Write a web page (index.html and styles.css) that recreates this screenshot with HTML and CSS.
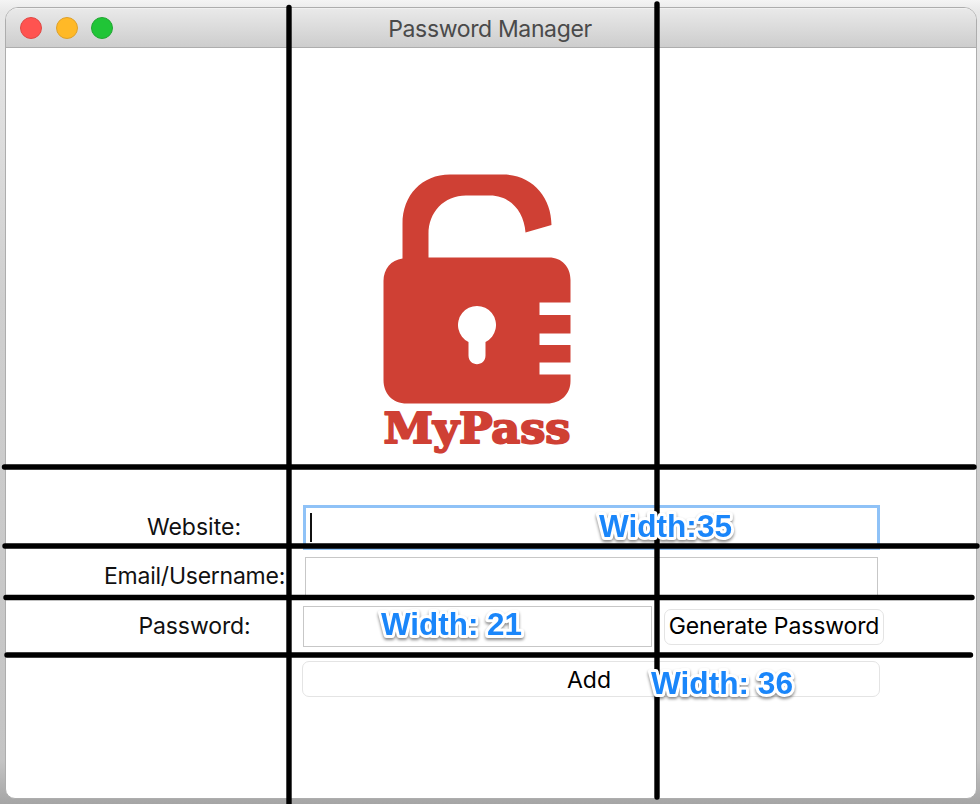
FILE: index.html
```html
<!DOCTYPE html>
<html lang="en">
<head>
<meta charset="utf-8">
<title>Password Manager</title>
<link rel="stylesheet" href="styles.css">
</head>
<body>
<main class="window">
  <header class="titlebar">
    <div class="lights"><span class="light close"></span><span class="light minimize"></span><span class="light expand"></span></div>
    <h1 class="title">Password Manager</h1>
  </header>
  <section class="hero">
    <svg class="logo" width="200" height="290" viewBox="377 170 200 290" role="img" aria-label="MyPass">
      <path fill="#cf4034" fill-rule="evenodd" d="M402.500 258.500V224C402.500 195 422 174.500 450 174.500H503C532 174.500 551.500 197 551.500 225L525.500 232.500C524 211 510 195.500 490 195.500H466C444 195.500 428.500 212 428.500 234V257.500H549C562 257.500 570.500 267 570.500 280V302.500H539.500V315H570.500V333.500H539.500V345H570.500V362.500H539.500V374.500H570.500V381C570.500 394 561 403.500 547 403.500H407C392 403.500 383.500 393 383.500 380V281C383.500 269 391 260 402.500 258.500ZM468.500 342V355.500C468.500 367 485.500 367 485.500 355.500V342A19 19 0 1 0 468.500 342Z"/>
      <text class="brand" x="383.500" y="443" textLength="187" lengthAdjust="spacingAndGlyphs">MyPass</text>
    </svg>
  </section>
  <form class="form">
    <div class="row website"><label for="site">Website:</label><input id="site" class="field focused"><i class="caret"></i></div>
    <div class="row email"><label for="mail">Email/Username:</label><input id="mail" class="field"></div>
    <div class="row password"><label for="pass">Password:</label><input id="pass" class="field"><button type="button" class="button generate">Generate Password</button></div>
    <div class="row actions"><button type="button" class="button add">Add</button></div>
  </form>
</main>
<svg class="guides" width="980" height="804" viewBox="0 0 980 804">
  <g class="lines">
    <path d="M289 7.500V806M657 4V797M4.500 467H974M5 546H977M6 597.500H972M7 655H970.500"/>
  </g>
  <g class="notes">
    <text x="599" y="537" textLength="133" lengthAdjust="spacingAndGlyphs">Width:35</text>
    <text x="381" y="635" textLength="141" lengthAdjust="spacingAndGlyphs">Width: 21</text>
    <text x="651" y="693.500" textLength="142" lengthAdjust="spacingAndGlyphs">Width: 36</text>
  </g>
</svg>
</body>
</html>
```
FILE: styles.css
```css
* { box-sizing: border-box; }
html { height: 100%; }
body {
  margin: 0;
  height: 804px;
  padding: 7px 3px 5px 5px;
  overflow: hidden;
  position: relative;
  background: linear-gradient(#f4f4f4 0, #e8e8e8 12px, #cfcfcf 300px, #c4c4c4 760px, #a5a5a5 804px);
  font-family: Inter, "Liberation Sans", sans-serif;
  font-size: 23px;
  color: #111;
}
.window {
  height: 792px;
  border: 1px solid #adadad;
  border-radius: 13px 13px 10px 10px;
  background: #fff;
  overflow: hidden;
}
.titlebar {
  height: 40px;
  display: grid;
  grid-template-columns: 200px 1fr 200px;
  align-items: center;
  background: linear-gradient(#e9e9e9, #cdcdcd);
  border-bottom: 1px solid #adadad;
  border-top: 1px solid #f1f1f1;
}
.lights { display: flex; gap: 13.500px; padding-left: 14px; }
.light { width: 22px; height: 22px; border-radius: 50%; border: 1px solid; }
.close { background: #ff5350; border-color: #df4844; }
.minimize { background: #ffb927; border-color: #dda02b; }
.expand { background: #20c537; border-color: #23a633; }
.title { margin: 0; padding: 2px 2px 0 0; font-size: 23px; font-weight: 400; letter-spacing: -.36px; color: #4a4a4a; text-align: center; line-height: 28px; }
.hero { height: 457px; padding: 122px 0 0 371px; }
.logo { display: block; }
.brand { font: bold 42px "DejaVu Serif", serif; fill: #cf4034; stroke: #cf4034; stroke-width: 2px; stroke-linejoin: round; }
.form { padding-left: 98px; }
.row { display: flex; align-items: center; }
.row label { width: 180px; text-align: center; line-height: 28px; flex: none; white-space: nowrap; }
.field { border: 1px solid #c7c7c7; outline: 0; background: #fff; padding: 0; margin: 0 0 0 19px; height: 100%; }
.website { height: 45px; }
.website label { margin-top: -2px; }
.focused { width: 577px; border: 3px solid #8fc2f7; }
.caret { width: 2px; height: 29px; background: #111; margin-left: -570px; }
.email { height: 41px; margin-top: 7px; }
.email label { margin-top: -3px; letter-spacing: -.24px; }
.email .field { width: 573px; margin-left: 21px; }
.password { height: 41px; margin-top: 8px; }
.password label { margin-top: -2px; padding-left: 1px; letter-spacing: -.1px; }
.password .field { width: 349px; }
.button { font: inherit; color: #000; background: #fff; border: 1px solid #e4e4e4; border-radius: 7px; padding: 0; height: 36px; line-height: 30px; }
.generate { width: 220px; margin-left: 12px; padding-bottom: 2px; white-space: nowrap; letter-spacing: -.13px; }
.actions { margin-top: 14px; padding-left: 198px; }
.add { width: 578px; padding: 1px 4px 0 0; }
.guides { position: absolute; left: 0; top: 0; pointer-events: none; }
.lines { fill: none; stroke: #000; stroke-width: 5.400px; stroke-linecap: round; }
.notes { font: bold 32px "Liberation Sans", Arial, sans-serif; fill: #1a86fa; stroke: #fff; stroke-width: 6px; stroke-linejoin: round; paint-order: stroke; filter: drop-shadow(0 2px 1.500px #0007); }
```
